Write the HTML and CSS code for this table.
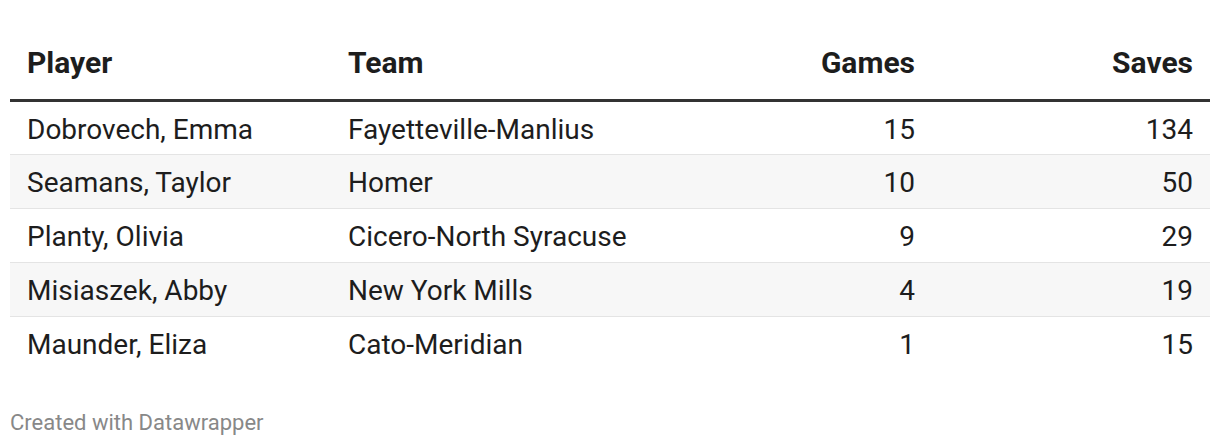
FILE: index.html
```html
<!DOCTYPE html>
<html>
<head>
<meta charset="utf-8">
<link rel="stylesheet" href="styles.css">
</head>
<body>
<div class="chart">
  <table class="stats">
    <colgroup>
      <col class="c-player">
      <col class="c-team">
      <col class="c-games">
      <col class="c-saves">
    </colgroup>
    <thead>
      <tr>
        <th class="left">Player</th>
        <th class="left">Team</th>
        <th class="right">Games</th>
        <th class="right">Saves</th>
      </tr>
    </thead>
    <tbody>
      <tr><td class="left">Dobrovech, Emma</td><td class="left">Fayetteville-Manlius</td><td class="right">15</td><td class="right">134</td></tr>
      <tr><td class="left">Seamans, Taylor</td><td class="left">Homer</td><td class="right">10</td><td class="right">50</td></tr>
      <tr><td class="left">Planty, Olivia</td><td class="left">Cicero-North Syracuse</td><td class="right">9</td><td class="right">29</td></tr>
      <tr><td class="left">Misiaszek, Abby</td><td class="left">New York Mills</td><td class="right">4</td><td class="right">19</td></tr>
      <tr><td class="left">Maunder, Eliza</td><td class="left">Cato-Meridian</td><td class="right">1</td><td class="right">15</td></tr>
    </tbody>
  </table>
  <div class="footer">Created with Datawrapper</div>
</div>
</body>
</html>
```

FILE: styles.css
```css
html, body {
  margin: 0;
  padding: 0;
  background: #ffffff;
}
.chart {
  padding: 10px 10px 0 10px;
  font-family: Roboto, "Liberation Sans", sans-serif;
  color: #1d1d1d;
}
.stats {
  width: 1200px;
  border-collapse: collapse;
  table-layout: fixed;
}
.c-player { width: 321px; }
.c-team { width: 321px; }
.c-games { width: 280px; }
.c-saves { width: 278px; }
.stats th {
  font-size: 30px;
  font-weight: 700;
  line-height: 34px;
  padding: 36px 17px 19px 17px;
  border-bottom: 3px solid #333333;
  color: #1d1d1d;
}
.stats td {
  font-size: 28px;
  line-height: 32px;
  height: 54px;
  padding: 3px 17px 0 17px;
  box-sizing: border-box;
  border-bottom: 1px solid #e4e4e4;
  color: #1d1d1d;
}
.stats tbody tr:nth-child(even) td {
  background: #f7f7f7;
}
.stats tbody tr:last-child td {
  border-bottom: none;
}
.left { text-align: left; }
.right { text-align: right; }
.footer {
  margin-top: 39px;
  font-size: 22px;
  color: #888888;
  line-height: 26px;
}
```
